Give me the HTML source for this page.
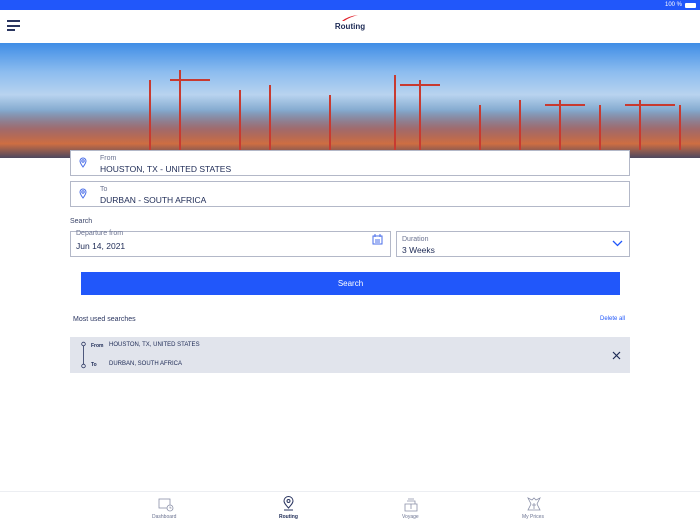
<!DOCTYPE html><html><head><style>
*{margin:0;padding:0;box-sizing:border-box}
body{width:700px;height:525px;background:#fff;font-family:"Liberation Sans",sans-serif;position:relative;overflow:hidden;color:#1d2a55}
.a{position:absolute}
.box{position:absolute;border:1px solid #b3b8c8;background:#fff}
.lbl{position:absolute;font-size:7px;color:#6a7290}
.val{position:absolute;font-size:8.5px;color:#1d2a55}
</style></head><body>
<div class="a" style="left:0;top:0;width:700px;height:10px;background:#2157fa"></div>
<div class="a" style="right:18px;top:2px;font-size:6px;color:#fff">100 %</div>
<div class="a" style="right:4px;top:3px;width:11px;height:5px;background:#fff;border-radius:1px"></div>
<div class="a" style="left:7px;top:20px;width:13px;height:2px;background:#2a3560"></div>
<div class="a" style="left:7px;top:25px;width:13px;height:2px;background:#2a3560"></div>
<div class="a" style="left:7px;top:29px;width:8px;height:2px;background:#2a3560"></div>
<svg class="a" style="left:340px;top:14px" width="20" height="8"><path d="M2 7 Q8 2 18 1 Q10 3 4 7Z" fill="#e0202a"/></svg>
<div class="a" style="left:0;width:700px;top:22px;text-align:center;font-size:8px;font-weight:bold;color:#1d2a55">Routing</div>
<div class="a" style="left:0;top:43px;width:700px;height:115px;background:linear-gradient(180deg,#3f8de6 0%,#8cbcef 25%,#b8d3ef 45%,#7fa6cc 60%,#4d78aa 80%,#3a5a88 100%)"></div>
<div class="a" style="left:0;top:110px;width:700px;height:48px;background:linear-gradient(180deg,rgba(200,90,70,0) 0%,rgba(210,90,60,.6) 40%,rgba(230,110,50,.85) 70%,rgba(80,70,90,.9) 100%)"></div>
<svg class="a" style="left:0;top:60px" width="700" height="98" fill="none" stroke="#c83a30" stroke-width="2">
<path d="M150 90V20M180 90V10M170 20h40M240 90V30M270 90V25M330 90V35M395 90V15M420 90V20M400 25h40M480 90V45M520 90V40M560 90V40M600 90V45M640 90V40M680 90V45M545 45h40M625 45h50"/>
</svg>
<div class="box" style="left:70px;top:150px;width:560px;height:26px"></div>
<div class="box" style="left:70px;top:181px;width:560px;height:26px"></div>
<svg class="a" style="left:79px;top:157px" width="8" height="11"><path d="M4 10 C1 6 1 5 1 4 A3 3 0 0 1 7 4 C7 5 7 6 4 10Z" fill="none" stroke="#4a6ee8" stroke-width="1"/><circle cx="4" cy="4" r="1.2" fill="none" stroke="#4a6ee8"/></svg>
<svg class="a" style="left:79px;top:188px" width="8" height="11"><path d="M4 10 C1 6 1 5 1 4 A3 3 0 0 1 7 4 C7 5 7 6 4 10Z" fill="none" stroke="#4a6ee8" stroke-width="1"/><circle cx="4" cy="4" r="1.2" fill="none" stroke="#4a6ee8"/></svg>
<div class="lbl" style="left:100px;top:155px">From</div><div class="val" style="left:100px;top:164px">HOUSTON, TX - UNITED STATES</div>
<div class="lbl" style="left:100px;top:186px">To</div><div class="val" style="left:100px;top:195px">DURBAN - SOUTH AFRICA</div>
<div class="a" style="left:70px;top:218px;font-size:7px;color:#3a4468">Search</div>
<div class="box" style="left:70px;top:231px;width:321px;height:26px"></div>
<div class="lbl" style="left:76px;top:230px">Departure from</div><div class="val" style="left:76px;top:241px">Jun 14, 2021</div>
<svg class="a" style="left:372px;top:234px" width="11" height="11"><rect x="1" y="2" width="9" height="8" fill="none" stroke="#4a6ee8"/><path d="M3 0v3M8 0v3M3 6h5M3 8h5" stroke="#4a6ee8"/></svg>
<div class="box" style="left:396px;top:231px;width:234px;height:26px"></div>
<div class="lbl" style="left:402px;top:236px">Duration</div><div class="val" style="left:402px;top:245px">3 Weeks</div>
<svg class="a" style="left:612px;top:240px" width="11" height="7"><path d="M1 1l4.5 4.5L10 1" fill="none" stroke="#2157fa" stroke-width="1.3"/></svg>
<div class="a" style="left:81px;top:272px;width:539px;height:23px;background:#2157fa;color:#fff;font-size:8px;text-align:center;line-height:23px">Search</div>
<div class="a" style="left:73px;top:316px;font-size:7px;color:#2a3560">Most used searches</div>
<div class="a" style="left:600px;top:316px;font-size:6px;color:#2157fa">Delete all</div>
<div class="a" style="left:70px;top:337px;width:560px;height:36px;background:#e1e4ec"></div>
<svg class="a" style="left:80px;top:341px" width="7" height="28"><circle cx="3.5" cy="3" r="1.8" fill="none" stroke="#2a3560" stroke-width=".8"/><circle cx="3.5" cy="25" r="1.8" fill="none" stroke="#2a3560" stroke-width=".8"/><path d="M3.5 5v18" stroke="#2a3560" stroke-width=".8"/></svg>
<div class="a" style="left:91px;top:343px;font-size:5px;font-weight:bold">From</div>
<div class="a" style="left:109px;top:342px;font-size:6px">HOUSTON, TX, UNITED STATES</div>
<div class="a" style="left:91px;top:362px;font-size:5px;font-weight:bold">To</div>
<div class="a" style="left:109px;top:361px;font-size:6px">DURBAN, SOUTH AFRICA</div>
<svg class="a" style="left:612px;top:351px" width="9" height="9"><path d="M1 1l7 7M8 1l-7 7" stroke="#1d2a55" stroke-width="1.2"/></svg>
<div class="a" style="left:0;top:491px;width:700px;height:1px;background:#eceef2"></div>
<svg class="a" style="left:158px;top:497px" width="16" height="15" fill="none" stroke="#8a90a8" stroke-width=".8"><rect x="1" y="2" width="11" height="9"/><circle cx="12" cy="11" r="3" fill="#fff"/><path d="M12 9.5v1.5h1.5"/></svg>
<svg class="a" style="left:282px;top:496px" width="13" height="16" fill="none" stroke="#2a3560" stroke-width="1"><path d="M6.5 12C2 7 2 6 2 5A4.5 4.5 0 0 1 11 5C11 6 11 7 6.5 12Z"/><circle cx="6.5" cy="5" r="1.5"/><path d="M2 14h9"/></svg>
<svg class="a" style="left:404px;top:497px" width="14" height="15" fill="none" stroke="#8a90a8" stroke-width=".8"><path d="M3 4h8v3M1 7h12v7H1zM7 7v5M4 2h6"/></svg>
<svg class="a" style="left:527px;top:497px" width="14" height="15" fill="none" stroke="#8a90a8" stroke-width=".8"><path d="M1 1l4 2 2-2 2 2 4-2-3 6 3 6H1l3-6zM5 8h4M7 6v6"/></svg>
<div class="a" style="left:152px;top:514px;font-size:5px;color:#6a7290">Dashboard</div>
<div class="a" style="left:279px;top:514px;font-size:5px;font-weight:bold;color:#1d2a55">Routing</div>
<div class="a" style="left:402px;top:514px;font-size:5px;color:#6a7290">Voyage</div>
<div class="a" style="left:522px;top:514px;font-size:5px;color:#6a7290">My Prices</div>
</body></html>
